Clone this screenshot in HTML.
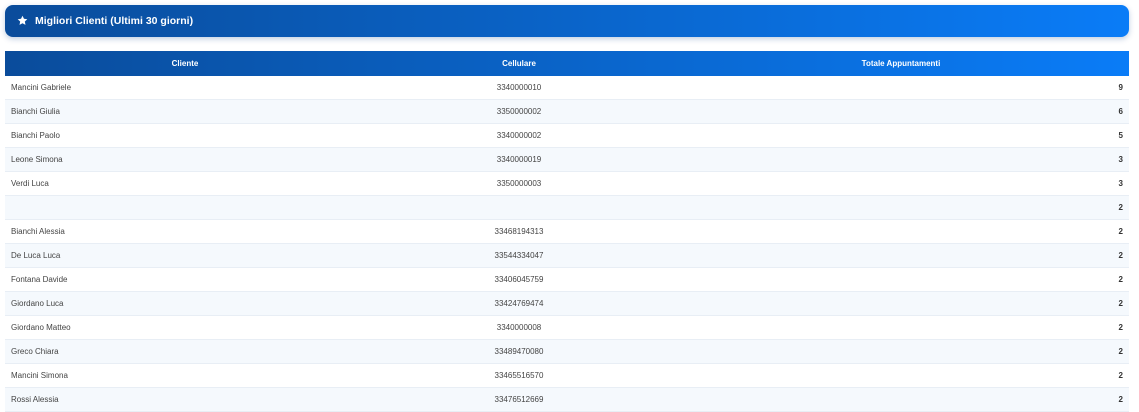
<!DOCTYPE html>
<html><head><style>
body{margin:0;background:#fff;font-family:"Liberation Sans",sans-serif;width:1139px;height:409px;overflow:hidden}
.hd{position:absolute;left:5px;top:5px;width:1124px;height:32px;border-radius:8px;background:linear-gradient(90deg,#0a4c9b,#0a7cf7);box-shadow:0 2px 6px rgba(0,60,140,.25);color:#fff;font-weight:bold;font-size:10.5px;line-height:32px}
.hd svg{position:absolute;left:12px;top:10px}
.hd span{position:absolute;left:30px}
table{position:absolute;left:5px;top:51px;width:1124px;border-collapse:collapse;font-size:8px;color:#444}
th{height:25px;color:#fff;font-size:8px;font-weight:bold;padding:0;text-align:center}
thead tr{background:linear-gradient(90deg,#0a4c9b,#0a7cf7)}
td{height:23px;padding:0 6px;border-bottom:1px solid #e8eef5}
tbody tr:nth-child(even){background:#f5f9fd}
td:nth-child(2){text-align:center}
td:nth-child(3){text-align:right;font-weight:bold;color:#333}
</style></head><body>
<div class="hd"><svg width="11" height="11" viewBox="0 0 24 24"><path fill="#fff" d="M12 1.5l3.2 6.8 7.3.9-5.4 5 1.4 7.3L12 17.9l-6.5 3.6 1.4-7.3-5.4-5 7.3-.9z"/></svg><span>Migliori Clienti (Ultimi 30 giorni)</span></div>
<table>
<colgroup><col style="width:360px"><col style="width:308px"><col></colgroup>
<thead><tr><th>Cliente</th><th>Cellulare</th><th>Totale Appuntamenti</th></tr></thead>
<tbody>
<tr><td>Mancini Gabriele</td><td>3340000010</td><td>9</td></tr>
<tr><td>Bianchi Giulia</td><td>3350000002</td><td>6</td></tr>
<tr><td>Bianchi Paolo</td><td>3340000002</td><td>5</td></tr>
<tr><td>Leone Simona</td><td>3340000019</td><td>3</td></tr>
<tr><td>Verdi Luca</td><td>3350000003</td><td>3</td></tr>
<tr><td></td><td></td><td>2</td></tr>
<tr><td>Bianchi Alessia</td><td>33468194313</td><td>2</td></tr>
<tr><td>De Luca Luca</td><td>33544334047</td><td>2</td></tr>
<tr><td>Fontana Davide</td><td>33406045759</td><td>2</td></tr>
<tr><td>Giordano Luca</td><td>33424769474</td><td>2</td></tr>
<tr><td>Giordano Matteo</td><td>3340000008</td><td>2</td></tr>
<tr><td>Greco Chiara</td><td>33489470080</td><td>2</td></tr>
<tr><td>Mancini Simona</td><td>33465516570</td><td>2</td></tr>
<tr><td>Rossi Alessia</td><td>33476512669</td><td>2</td></tr>
</tbody></table>
</body></html>
